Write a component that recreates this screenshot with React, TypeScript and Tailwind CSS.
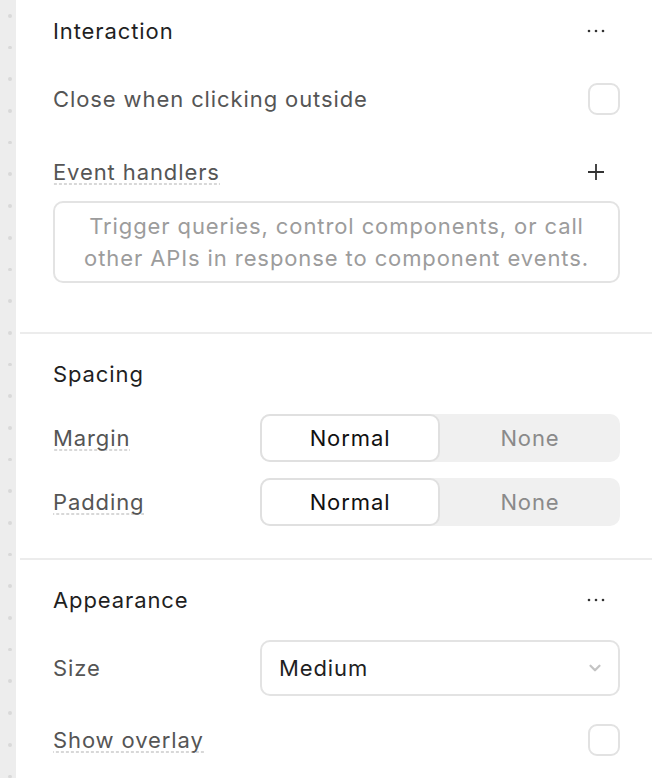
import { ChevronDown } from "lucide-react";

const Dots = () => (
  <svg width="18" height="4" viewBox="0 0 18 4" className="mr-[15px]">
    <circle cx="2" cy="2" r="1.3" fill="#333" />
    <circle cx="9" cy="2" r="1.3" fill="#333" />
    <circle cx="16" cy="2" r="1.3" fill="#333" />
  </svg>
);

const Plus = () => (
  <svg width="18" height="18" viewBox="0 0 18 18" className="mr-[15px]">
    <path d="M9 1v16M1 9h16" stroke="#333" strokeWidth="1.8" />
  </svg>
);

const Checkbox = () => (
  <div className="h-8 w-8 rounded-[9px] border-2 border-[#e2e2e2] bg-white" />
);

// label with the dotted hint underline
const HintLabel = ({ text }: { text: string }) => (
  <span className="bg-[linear-gradient(to_right,#d8d8d8_60%,transparent_0)] bg-[length:5px_2px] bg-bottom bg-repeat-x leading-[26px] text-[#555]">
    {text}
  </span>
);

const Segmented = ({ value }: { value: string }) => (
  <div className="grid h-12 w-[360px] grid-cols-2 rounded-[10px] bg-[#f0f0f0]">
    <div
      className={
        value === "Normal"
          ? "flex items-center justify-center rounded-[10px] border-2 border-[#e0e0e0] bg-white text-[#111]"
          : "flex items-center justify-center text-[#8a8a8a]"
      }
    >
      Normal
    </div>
    <div className="flex items-center justify-center text-[#8a8a8a]">None</div>
  </div>
);

export default function App() {
  return (
    <div className="flex h-[778px] w-[652px] overflow-hidden bg-white font-['Inter',sans-serif] text-[22px] tracking-[0.9px]">
      {/* left gutter with dots */}
      <div className="flex w-4 flex-col gap-[28px] bg-[#ededed] pl-2 pt-[14px]">
        {Array.from({ length: 25 }).map((_, i) => (
          <div key={i} className="h-1 w-1 rounded-full bg-[#d9d9d9]" />
        ))}
      </div>

      <div className="flex-1 pl-1">
        {/* Interaction */}
        <section className="border-b-2 border-[#ececec] pb-[49px] pl-[33px] pr-8 pt-[11px]">
          <div className="flex h-10 items-center justify-between">
            <span className="text-[#1f1f1f]">Interaction</span>
            <Dots />
          </div>
          <div className="mt-6 flex h-12 items-center justify-between">
            <span className="text-[#555]">Close when clicking outside</span>
            <Checkbox />
          </div>
          <div className="mt-[33px] flex h-8 items-center justify-between">
            <HintLabel text="Event handlers" />
            <Plus />
          </div>
          <div className="mt-[13px] rounded-[10px] border-2 border-[#e3e3e3] px-4 py-[7px] text-center leading-[32px] text-[#9c9c9c]">
            Trigger queries, control components, or call other APIs in response
            to component events.
          </div>
        </section>

        {/* Spacing */}
        <section className="border-b-2 border-[#ececec] pb-8 pl-[33px] pr-8 pt-5">
          <div className="flex h-10 items-center">
            <span className="text-[#1f1f1f]">Spacing</span>
          </div>
          <div className="mt-5 flex items-center justify-between">
            <HintLabel text="Margin" />
            <Segmented value="Normal" />
          </div>
          <div className="mt-4 flex items-center justify-between">
            <HintLabel text="Padding" />
            <Segmented value="Normal" />
          </div>
        </section>

        {/* Appearance */}
        <section className="pl-[33px] pr-8 pt-5">
          <div className="flex h-10 items-center justify-between">
            <span className="text-[#1f1f1f]">Appearance</span>
            <Dots />
          </div>
          <div className="mt-5 flex items-center justify-between">
            <span className="text-[#555]">Size</span>
            <div className="flex h-14 w-[360px] items-center justify-between rounded-[10px] border-2 border-[#e3e3e3] pl-[17px] pr-[14px] text-[#1f1f1f]">
              <span>Medium</span>
              <ChevronDown size={18} strokeWidth={3} color="#c4c4c4" />
            </div>
          </div>
          <div className="mt-7 flex h-8 items-center justify-between">
            <HintLabel text="Show overlay" />
            <Checkbox />
          </div>
        </section>
      </div>
    </div>
  );
}
